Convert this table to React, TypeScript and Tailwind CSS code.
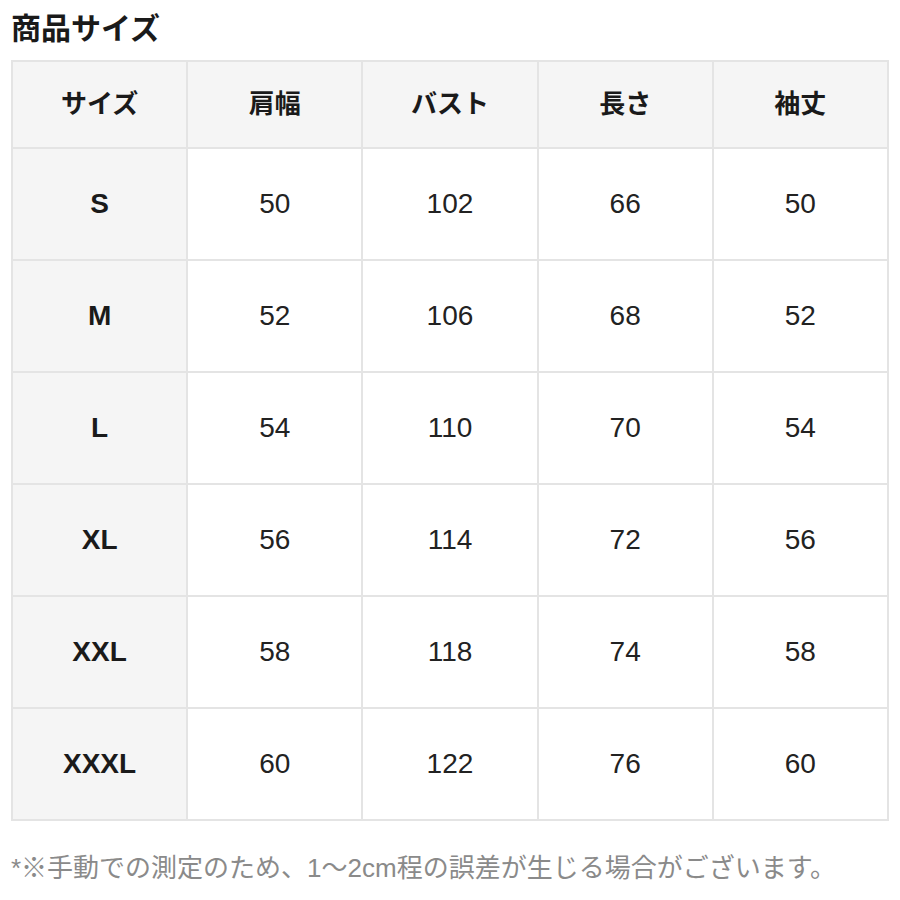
const headers = ['サイズ', '肩幅', 'バスト', '長さ', '袖丈'];

const rows = [
  { size: 'S', values: [50, 102, 66, 50] },
  { size: 'M', values: [52, 106, 68, 52] },
  { size: 'L', values: [54, 110, 70, 54] },
  { size: 'XL', values: [56, 114, 72, 56] },
  { size: 'XXL', values: [58, 118, 74, 58] },
  { size: 'XXXL', values: [60, 122, 76, 60] },
];

export default function App() {
  return (
    <div
      className="w-[900px] h-[900px] bg-white px-[11px] text-[#1a1a1a]"
      style={{ fontFamily: '"Liberation Sans", "Noto Sans CJK JP", sans-serif' }}
    >
      {/* Title */}
      <h1 className="pt-[10px] h-[60px] text-[30px] leading-[38px] font-bold">商品サイズ</h1>

      {/* Size table */}
      <table className="w-[878px] border-collapse table-fixed">
        <thead>
          <tr className="h-[87px]">
            {headers.map((h) => (
              <th
                key={h}
                className="border-2 border-[#e4e4e4] bg-[#f5f5f5] text-[26px] font-bold text-center"
              >
                {h}
              </th>
            ))}
          </tr>
        </thead>
        <tbody>
          {rows.map((row) => (
            <tr key={row.size} className="h-[112px]">
              <td className="border-2 border-[#e4e4e4] bg-[#f5f5f5] text-[28px] font-bold text-center">
                {row.size}
              </td>
              {row.values.map((v, i) => (
                <td
                  key={i}
                  className="border-2 border-[#e4e4e4] bg-white text-[28px] text-center text-[#222]"
                >
                  {v}
                </td>
              ))}
            </tr>
          ))}
        </tbody>
      </table>

      {/* Note */}
      <p className="mt-[29px] text-[26px] leading-[36px] text-[#8a8a8a] whitespace-nowrap">
        *※手動での測定のため、1〜2cm程の誤差が生じる場合がございます。
      </p>
    </div>
  );
}
